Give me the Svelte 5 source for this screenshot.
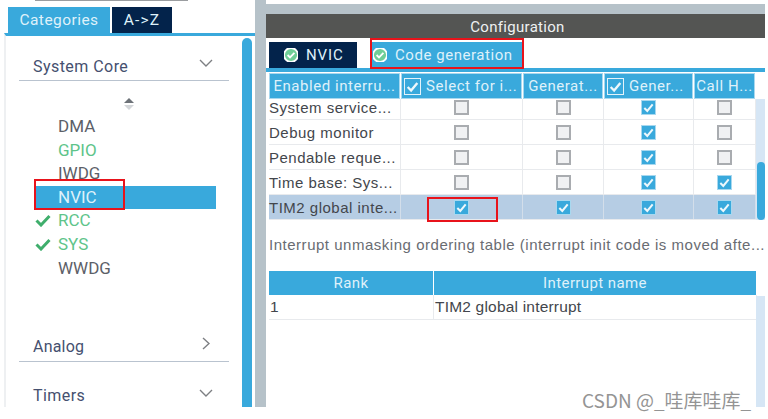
<script>
  const systems = [
    { name: "DMA", tone: "" },
    { name: "GPIO", tone: "ok" },
    { name: "IWDG", tone: "" },
    { name: "NVIC", tone: "selected" },
    { name: "RCC", tone: "ok", check: true },
    { name: "SYS", tone: "ok", check: true },
    { name: "WWDG", tone: "" },
  ];

  const rows = [
    { name: "System service...", vals: [0, 0, 1, 0] },
    { name: "Debug monitor", vals: [0, 0, 1, 0] },
    { name: "Pendable reque...", vals: [0, 0, 1, 0] },
    { name: "Time base: Sys...", vals: [0, 0, 1, 1] },
    { name: "TIM2 global inte...", vals: [1, 1, 1, 1], active: true },
  ];
</script>

<div class="page">
  <aside class="side">
    <div class="topline"></div>
    <div class="tabs">
      <span class="tab on">Categories</span>
      <span class="tab off">A-&gt;Z</span>
    </div>
    <div class="side-main">
      <div class="side-list">
        <div class="group first">
          <span>System Core</span>
          <svg width="14" height="8" viewBox="0 0 14 8"><path d="M1 1l6 6 6-6" /></svg>
        </div>
        <div class="sort">
          <svg width="12" height="14" viewBox="0 0 12 14">
            <path d="M6 1l5 5H1z" fill="#6d7278" />
            <path d="M1 8h10l-5 5z" fill="#d3d6d9" />
          </svg>
        </div>
        <ul class="items">
          {#each systems as s}
            <li class="item {s.tone}">
              {#if s.check}
                <svg class="tick" width="16" height="13" viewBox="0 0 16 13"><path d="M1.5 6.5l4.5 4.5 8.5-9" /></svg>
              {/if}
              <span>{s.name}</span>
            </li>
          {/each}
        </ul>
        <div class="group analog">
          <span>Analog</span>
          <svg width="8" height="13" viewBox="0 0 8 13"><path d="M1 1l6 5.5-6 5.5" /></svg>
        </div>
        <div class="group timers">
          <span>Timers</span>
          <svg width="14" height="8" viewBox="0 0 14 8"><path d="M1 1l6 6 6-6" /></svg>
        </div>
      </div>
      <div class="side-scroll"></div>
    </div>
    <div class="mark nvic-mark"></div>
  </aside>

  <main class="pane">
    <div class="pane-top"></div>
    <h1 class="title">Configuration</h1>
    <div class="cfg-tabs">
      <span class="cfg-tab dark">
        <svg width="14" height="14" viewBox="0 0 14 14"><circle cx="7" cy="7" r="7" fill="#6fcf97" /><path d="M3.6 7l2.4 2.4 4.4-4.6" /></svg>
        NVIC
      </span>
      <span class="cfg-tab blue">
        <svg width="14" height="14" viewBox="0 0 14 14"><circle cx="7" cy="7" r="7" fill="#6fcf97" /><path d="M3.6 7l2.4 2.4 4.4-4.6" /></svg>
        Code generation
      </span>
      <div class="mark code-mark"></div>
    </div>

    <div class="cfg-body">
      <div class="table-wrap">
        <div class="grid head">
          <div class="th">Enabled interru...</div>
          <div class="th bare"><i class="box on framed"><svg viewBox="0 0 14 14"><path d="M2.5 7.5l3.2 3.2 5.8-7" /></svg></i>Select for i...</div>
          <div class="th">Generat...</div>
          <div class="th bare"><i class="box on framed"><svg viewBox="0 0 14 14"><path d="M2.5 7.5l3.2 3.2 5.8-7" /></svg></i>Gener...</div>
          <div class="th">Call H...</div>
        </div>
        <div class="rows">
          {#each rows as r}
            <div class="grid row" class:active={r.active}>
              <div class="td name">{r.name}</div>
              {#each r.vals as v}
                <div class="td">
                  <i class="box" class:on={v}>
                    {#if v}<svg viewBox="0 0 14 14"><path d="M2.5 7.5l3.2 3.2 5.8-7" /></svg>{/if}
                  </i>
                </div>
              {/each}
            </div>
          {/each}
        </div>
        <div class="track upper"><div class="thumb"></div></div>
        <div class="mark tim-mark"></div>
      </div>

      <p class="note">Interrupt unmasking ordering table (interrupt init code is moved afte...</p>

      <div class="grid2 head2">
        <div>Rank</div>
        <div>Interrupt name</div>
      </div>
      <div class="grid2 row2">
        <div>1</div>
        <div>TIM2 global interrupt</div>
      </div>
      <div class="track lower"></div>
    </div>
    <span class="wm">CSDN @_哇库哇库_</span>
  </main>
</div>

<style>
  :global(body) {
    margin: 0;
    background: #fff;
  }

  .page {
    display: flex;
    align-items: flex-start;
    width: 768px;
    height: 419px;
    font-family: Roboto, "Liberation Sans", sans-serif;
    color: #4a4f57;
  }

  .side {
    position: relative;
    width: 255px;
    height: 407px;
    flex: none;
    display: flex;
    flex-direction: column;
    overflow: hidden;
  }
  .topline {
    width: 153px;
    height: 1px;
    margin-left: 35px;
    background: #9a9da0;
  }
  .tabs {
    display: flex;
    gap: 2px;
    height: 26px;
    margin: 6px 0 0 8px;
  }
  .tab {
    display: flex;
    align-items: center;
    justify-content: center;
    color: #dff1fa;
    font-size: 15.5px;
    letter-spacing: 0.45px;
  }
  .tab.on { width: 102px; background: #39a9dc; }
  .tab.off { width: 60px; background: #03234b; letter-spacing: 1.2px; }

  .side-main {
    flex: 1;
    min-height: 0;
    display: flex;
    margin-left: 4px;
    border-left: 2px solid #eef0f2;
    border-top: 3px solid #39a9dc;
  }
  .side-list {
    width: 236px;
    flex: none;
    padding-top: 2px;
  }
  .group {
    display: flex;
    justify-content: space-between;
    align-items: center;
    margin-left: 13px;
    width: 210px;
    height: 29px;
    padding: 0 16px 0 14px;
    box-sizing: border-box;
    font-size: 16px;
    letter-spacing: 0.45px;
    color: #45506f;
    border-bottom: 1px solid #b9c3cf;
  }
  .group svg { fill: none; stroke: #7d7f83; stroke-width: 1.4; margin-top: -6px; }
  .group.first { margin-top: 14px; }
  .group.analog { margin-top: 51px; height: 31px; padding-right: 19px; letter-spacing: 0.2px; }
  .group.timers { margin-top: 19px; border-bottom: 0; padding-bottom: 6px; height: 35px; }

  .sort {
    display: flex;
    justify-content: center;
    padding-left: 9px;
    margin-top: 16px;
    height: 15px;
  }
  .items {
    list-style: none;
    margin: 3px 0 0;
    padding: 0;
  }
  .item {
    position: relative;
    height: 23.6px;
    line-height: 23.6px;
    padding-left: 52px;
    font-size: 17px;
    color: #5c6068;
  }
  .item.ok { color: #5ec48a; }
  .item.selected {
    margin-left: 29px;
    padding-left: 23px;
    width: 158px;
    box-sizing: content-box;
    color: #dff1fa;
    background: #39a9dc;
  }
  .tick {
    position: absolute;
    left: 29px;
    top: 5px;
    fill: none;
    stroke: #3fae6c;
    stroke-width: 3;
  }
  .side-scroll {
    width: 10px;
    margin: 2px 0 0 0;
    border-radius: 5px 5px 0 0;
    background: #39a9dc;
  }

  .mark {
    position: absolute;
    box-sizing: border-box;
    border: 2px solid #e8131b;
    pointer-events: none;
  }
  .nvic-mark { left: 34px; top: 179px; width: 91px; height: 31px; }

  .pane {
    position: relative;
    flex: 1;
    height: 407px;
    min-width: 0;
    display: flex;
    flex-direction: column;
    padding-right: 3px;
    border-left: 11px solid #b6c2c9;
  }
  .pane-top {
    height: 10px;
    margin-top: 4px;
    background: #b6c2c9;
  }
  .title {
    margin: 0;
    height: 24px;
    line-height: 26px;
    padding-left: 4px;
    background: #545553;
    color: #eef1f2;
    text-align: center;
    font-size: 15px;
    font-weight: 400;
    letter-spacing: 0.3px;
  }
  .cfg-tabs {
    position: relative;
    display: flex;
    gap: 14px;
    height: 26px;
    padding: 4px 0 0 3px;
    border-bottom: 4px solid #39a9dc;
  }
  .cfg-tab {
    display: flex;
    align-items: center;
    gap: 7px;
    color: #dff1fa;
    font-size: 15px;
    letter-spacing: 0.9px;
    height: 26px;
    box-sizing: border-box;
  }
  .cfg-tab.dark { width: 88px; padding-left: 15px; background: #03234b; gap: 8px; }
  .cfg-tab.blue { width: 152px; padding-left: 2px; background: #39a9dc; gap: 8px; letter-spacing: 0.55px; }
  .cfg-tab svg { fill: none; stroke: #fff; stroke-width: 1.8; }
  .code-mark { left: 104px; top: 0; width: 154px; height: 31px; }

  .cfg-body {
    position: relative;
    flex: 1;
    min-height: 0;
    padding: 1px 0 0 3px;
  }
  .table-wrap { position: relative; width: 487px; }
  .grid {
    display: grid;
    grid-template-columns: 132px 122px 81px 90px 62px;
  }
  .head { position: relative; z-index: 1; height: 26px; background: #fff; }
  .th {
    display: flex;
    align-items: center;
    justify-content: center;
    gap: 5px;
    height: 26px;
    margin-right: 1px;
    padding: 0 1px;
    box-sizing: border-box;
    border: 1px solid #a8d8ef;
    background: #39a9dc;
    color: #dff1fa;
    font-size: 15px;
    letter-spacing: 0.55px;
    white-space: nowrap;
    overflow: hidden;
  }
  .th.bare { justify-content: flex-start; padding-left: 2px; }

  /* first row is scrolled partly under the header */
  .rows { margin-top: -4px; }
  .row {
    height: 25px;
    border-bottom: 1px solid #e8eaed;
    box-sizing: border-box;
  }
  .td {
    display: flex;
    align-items: center;
    justify-content: center;
    border-right: 1px solid #e8eaed;
    font-size: 15px;
    color: #43464c;
  }
  .td.name {
    justify-content: flex-start;
    white-space: nowrap;
    letter-spacing: 0.5px;
    font-family: "Liberation Sans", sans-serif;
  }
  .row.active { background: #b6cde4; }
  .row.active .td { border-right-color: #d3deea; }

  .box {
    display: block;
    width: 15px;
    height: 15px;
    box-sizing: border-box;
    background: #f0f1f3;
    border: 2px solid #a9acb0;
  }
  .box svg { display: block; width: 100%; height: 100%; fill: none; stroke: #eef8fc; stroke-width: 2.2; }
  .box.on { background: #39a9dc; border: 1px solid #a8d8ef; }
  .box.framed { width: 17px; height: 17px; flex: none; border: 1.5px solid #e4f3fa; }

  .note {
    margin: 0;
    padding-top: 16px;
    height: 51px;
    box-sizing: border-box;
    font-family: "Liberation Sans", sans-serif;
    font-size: 15px;
    letter-spacing: 0.52px;
    color: #696c72;
    white-space: nowrap;
  }
  .grid2 {
    display: grid;
    grid-template-columns: 165px 323px;
    width: 488px;
  }
  .head2 { height: 24px; }
  .head2 div {
    display: flex;
    align-items: center;
    justify-content: center;
    margin-right: 1px;
    background: #39a9dc;
    color: #dff1fa;
    font-size: 15px;
    letter-spacing: 0.4px;
  }
  .row2 {
    height: 24px;
    border-bottom: 1.5px solid #e8eaed;
    font-family: "Liberation Sans", sans-serif;
    font-size: 15.5px;
    letter-spacing: 0.2px;
    color: #43464c;
    line-height: 23px;
  }
  .row2 div { padding-left: 1px; border-right: 1px solid #e8eaed; }

  .track {
    position: absolute;
    left: 490px;
    width: 9px;
    background: #d6e6f5;
  }
  .track.upper { left: 487px; top: 26px; height: 121px; }
  .track.lower { top: 224px; bottom: 0; }
  .thumb {
    width: 8px;
    height: 58px;
    margin: 63px 0 0 1px;
    border-radius: 4px;
    background: #39a9dc;
  }
  .tim-mark { left: 158px; top: 124px; width: 71px; height: 25px; }

  .wm {
    position: absolute;
    left: 316px;
    top: 390px;
    font-family: "Noto Sans CJK SC", sans-serif;
    font-size: 19px;
    line-height: 1;
    color: #949494;
    white-space: nowrap;
  }
</style>
